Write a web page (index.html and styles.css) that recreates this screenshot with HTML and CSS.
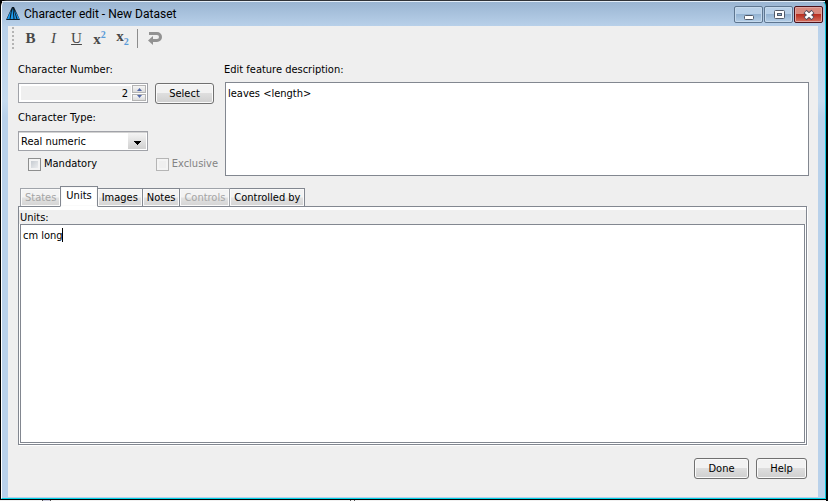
FILE: index.html
```html
<!DOCTYPE html>
<html lang="en">
<head>
<meta charset="utf-8">
<title>Character edit - New Dataset</title>
<link rel="stylesheet" href="styles.css">
</head>
<body>
<main class="window">
  <header class="titlebar">
    <svg class="app-icon" width="14" height="14" viewBox="0 0 14 14" aria-hidden="true">
      <path d="M6 0h2l6 13H0z" fill="#0d1a24"/>
      <path d="M5 3L1 12h2.500z" fill="#1b9cf0"/>
      <path d="M6.500 1L4.500 12h3z" fill="#1b9cf0"/>
      <path d="M7.500 2L8.500 12h2zM8.500 3l3 9h2z" fill="#1b94e8"/>
    </svg>
    <h1 class="title">Character edit - New Dataset</h1>
    <div class="window-buttons">
      <button class="win-btn" type="button" aria-label="Minimize">
        <svg width="12" height="12" viewBox="0 0 12 12"><rect x="1.500" y="6.500" width="9" height="4" rx="1" fill="#fff" stroke="#515a69"/></svg>
      </button>
      <button class="win-btn" type="button" aria-label="Maximize">
        <svg width="12" height="12" viewBox="0 0 12 12"><rect x="1.500" y="1.500" width="10" height="8" rx="1" fill="#fff" stroke="#515a69"/><rect x="4.500" y="4.500" width="4" height="2" fill="#91b4d2" stroke="#515a69"/></svg>
      </button>
      <button class="win-btn close" type="button" aria-label="Close">
        <svg width="12" height="12" viewBox="0 0 12 12"><path d="M2 2.500l8 7M10 2.500l-8 7" stroke="#554d5b" stroke-width="4.500"/><path d="M2.500 3l7 6M9.500 3l-7 6" stroke="#fff" stroke-width="2.500"/></svg>
      </button>
    </div>
  </header>
  <div class="client">
    <div class="toolbar" role="toolbar" aria-label="Formatting">
      <span class="grip"></span>
      <button class="tool" type="button" aria-label="Bold"><b>B</b></button>
      <button class="tool" type="button" aria-label="Italic"><i>I</i></button>
      <button class="tool underline" type="button" aria-label="Underline">U</button>
      <button class="tool" type="button" aria-label="Superscript"><b class="lowered">x</b><span class="sup">2</span></button>
      <button class="tool" type="button" aria-label="Subscript"><b class="raised">x</b><span class="sub">2</span></button>
      <span class="divider"></span>
      <button class="tool" type="button" aria-label="Undo">
        <svg width="14" height="14" viewBox="0 0 14 14"><path d="M1 2.500h8a3.500 3.500 0 0 1 0 7H5" fill="none" stroke="#929292" stroke-width="3"/><path d="M0 9.500l5-4.500v9z" fill="#929292"/></svg>
      </button>
    </div>
    <form class="form">
      <section class="fields">
        <div class="settings">
          <label for="number">Character Number:</label>
          <div class="number-row">
            <div class="spinner">
              <input id="number" type="text" value="2" readonly>
              <span class="steps">
                <button type="button" aria-label="Increase"><svg width="7" height="4" viewBox="0 0 7 4"><path d="M1 4l2.500-3L6 4z" fill="#5368a8"/></svg></button>
                <button type="button" aria-label="Decrease"><svg width="7" height="4" viewBox="0 0 7 4"><path d="M1 0l2.500 3L6 0z" fill="#5368a8"/></svg></button>
              </span>
            </div>
            <button class="btn select-btn" type="button">Select</button>
          </div>
          <label for="type">Character Type:</label>
          <div class="combo">
            <select id="type"><option>Real numeric</option></select>
          </div>
          <div class="checks">
            <label class="check"><input type="checkbox">Mandatory</label>
            <label class="check off"><input type="checkbox" disabled>Exclusive</label>
          </div>
        </div>
        <div class="description">
          <label for="description">Edit feature description:</label>
          <textarea id="description" spellcheck="false">leaves &lt;length&gt;</textarea>
        </div>
      </section>
      <section class="tabs">
        <div class="tablist" role="tablist">
          <button class="tab" role="tab" type="button" disabled>States</button>
          <button class="tab active" role="tab" type="button" aria-selected="true">Units</button>
          <button class="tab" role="tab" type="button">Images</button>
          <button class="tab" role="tab" type="button">Notes</button>
          <button class="tab" role="tab" type="button" disabled>Controls</button>
          <button class="tab" role="tab" type="button">Controlled by</button>
        </div>
        <div class="panel" role="tabpanel">
          <label for="units">Units:</label>
          <div class="units-box">
            <textarea id="units" spellcheck="false">cm long</textarea>
            <span class="caret"></span>
          </div>
        </div>
      </section>
      <footer class="actions">
        <button class="btn done" type="button">Done</button>
        <button class="btn help" type="button">Help</button>
      </footer>
    </form>
  </div>
</main>
</body>
</html>
```
FILE: styles.css
```css
* { box-sizing: border-box; }
body {
  margin: 0;
  height: 100vh;
  padding: 0 2px 2px 1px;
  background:
    linear-gradient(90deg, #f0f0f0 42px, #555 42px 43px, #ccd 43px 50px, #555 50px 51px, #f0f0f0 51px 350px, #555 350px 351px, #f0f0f0 351px 354px, #555 354px 355px, #f0f0f0 355px) bottom left / calc(100% - 2px) 1px no-repeat,
    #000;
  font: 11px/16px "DejaVu Sans Condensed", "DejaVu Sans", sans-serif;
  color: #000;
}
button, input, select, textarea { font: inherit; color: inherit; margin: 0; }
button { padding: 0; }
.window {
  height: 100%;
  display: flex;
  flex-direction: column;
  padding: 0 7px 1px 6px;
  border: 1px solid #fff;
  border-top-color: #303338;
  border-right-color: #10c4dc;
  border-bottom-color: #00d4e8;
  border-radius: 6px 6px 0 0;
  background: linear-gradient(#99b4d1, #b9d1ea 26px, #c6dbef 100px, #b9d1ea 116px);
}
.titlebar { height: 25px; flex: none; display: flex; align-items: flex-start; box-shadow: inset 0 1px #e4eef8; margin: 0 -7px 0 -6px; padding: 0 2px 0 4px; }
.app-icon { margin: 6px 4px 0 0; }
.title { flex: 1; margin: 5px 0 0; font: 12px/17px Roboto, sans-serif; }
.window-buttons { display: flex; gap: 1px; padding-top: 5px; }
.win-btn {
  width: 29px; height: 17px;
  display: flex; align-items: center; justify-content: center;
  border: 1px solid #5e7690;
  border-radius: 2px;
  box-shadow: inset 0 0 0 1px #c5d9ec;
  background: linear-gradient(#b8d0e8 45%, #94b3d2 50%, #b4cee7);
}
.win-btn.close {
  border-color: #4c1019;
  box-shadow: inset 0 0 0 1px #dfa5a0;
  background: linear-gradient(#d8897e 45%, #b92e20 50%, #d6705e);
}
.client { flex: 1; min-height: 0; display: flex; flex-direction: column; background: #efefef; }
.toolbar { height: 24px; flex: none; display: flex; align-items: center; padding-left: 4px; }
.grip { width: 2px; height: 22px; margin-right: 5px; background: repeating-linear-gradient(#b4b4b4 0 2px, transparent 2px 4px); }
.tool {
  width: 23px; height: 22px;
  display: flex; align-items: center; justify-content: center;
  border: 0;
  background: none;
  color: #484848;
  font: 15px/16px "Liberation Serif", serif;
}
.underline { text-decoration: underline; }
.sup, .sub { color: #5a9bd8; font: bold 10px/10px "Liberation Serif", serif; }
.sup { align-self: flex-start; padding-top: 3px; }
.sub { align-self: flex-end; padding-bottom: 2px; }
.lowered { padding-top: 2px; }
.raised { padding-bottom: 4px; }
.divider { width: 1px; height: 19px; margin: 0 5px 0 3px; background: #8c8c8c; }
.form { flex: 1; min-height: 0; display: flex; flex-direction: column; padding: 12px 9px 18px 10px; }
.fields { display: flex; flex: none; gap: 7px; }
.settings { width: 200px; display: flex; flex-direction: column; }
.number-row { display: flex; gap: 7px; margin: 5px 0 6px; }
.spinner, .combo { width: 130px; height: 20px; display: flex; border: 1px solid #a0a2a8; background: #fff; }
.spinner { padding: 1px; }
.spinner input { flex: 1; min-width: 0; padding: 1px 3px 0; border: 1px solid #fff; background: #efefef; text-align: right; }
.steps { width: 14px; display: flex; flex-direction: column; gap: 1px; }
.steps button {
  flex: 1; min-height: 0;
  display: flex; align-items: center; justify-content: center;
  border: 1px solid #b4b4b4;
  background: linear-gradient(#f6f6f6, #dcdcdc);
}
.btn {
  height: 21px;
  border: 1px solid #707070;
  border-radius: 3px;
  box-shadow: inset 0 0 0 1px #fafafa;
  background: linear-gradient(#f2f2f2 45%, #dedede 50%, #cfcfcf);
}
.select-btn { width: 59px; }
.combo { margin: 5px 0; padding: 1px; box-shadow: inset 0 1px #d2d2d2; }
.combo select {
  flex: 1;
  appearance: none;
  border: 0;
  padding: 1px 1px 0;
  background:
    linear-gradient(#000, #000) right 5px top 8px / 7px 1px no-repeat,
    linear-gradient(#000, #000) right 6px top 9px / 5px 1px no-repeat,
    linear-gradient(#000, #000) right 7px top 10px / 3px 1px no-repeat,
    linear-gradient(#000, #000) right 8px top 11px / 1px 1px no-repeat,
    linear-gradient(#f4f4f4, #d0d0d0) right / 18px 100% no-repeat,
    #fff;
}
.checks { display: flex; justify-content: space-between; padding-left: 10px; }
.check { display: flex; align-items: center; gap: 3px; }
.check input { appearance: none; width: 13px; height: 13px; border: 1px solid #8e8f8f; box-shadow: inset 0 0 0 2px #f4f4f4; background: linear-gradient(135deg, #bcc2c9, #f6f6f6); }
.check.off { color: #838383; }
.check.off input { border-color: #b5b5b5; background: #efefef; }
.description { flex: 1; display: flex; flex-direction: column; gap: 4px; }
.description label { margin-left: -1px; }
textarea { display: block; width: 100%; resize: none; border: 1px solid #828790; border-radius: 0; background: #fff; padding: 3px 2px; outline: 0; }
.description textarea { height: 94px; }
.tabs { flex: 1; min-height: 0; display: flex; flex-direction: column; margin: 10px 2px 0 0; }
.tablist { display: flex; align-items: flex-end; height: 21px; padding-left: 2px; }
.tab {
  height: 19px;
  padding: 0 4px;
  border: 1px solid #828790;
  border-left-width: 0;
  background: linear-gradient(#f3f3f3 48%, #e2e2e2 52%, #d4d4d4);
  box-shadow: inset 0 0 0 1px #fafafa;
}
.tab:first-child { border-left-width: 1px; border-right-width: 0; }
.tab:disabled { color: #a5a5a5; border-color: #a0a4aa; }
.tab.active { position: relative; z-index: 1; height: 21px; padding: 0 5px 2px; border-left-width: 1px; border-bottom-color: #fff; background: #fff; }
.panel { flex: 1; min-height: 0; display: flex; flex-direction: column; margin-top: -1px; border: 1px solid #828790; padding: 0 1px 1px; background: linear-gradient(#fff 3px, #efefef 3px 17px, #fff 17px); box-shadow: 1px 1px #fff; }
.panel label { height: 17px; padding-top: 3px; }
.units-box { flex: 1; min-height: 0; position: relative; }
.units-box textarea { height: 100%; }
.caret { position: absolute; left: 42px; top: 4px; width: 1px; height: 14px; background: #000; }
.actions { flex: none; display: flex; justify-content: flex-end; gap: 7px; margin: 13px 2px 0 0; }
.done { width: 55px; }
.help { width: 51px; }
```
